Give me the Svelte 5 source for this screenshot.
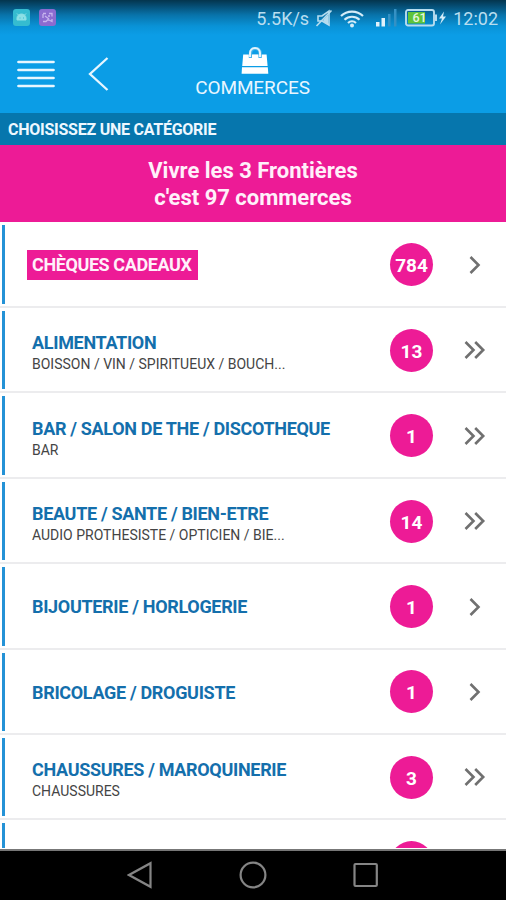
<script>
    const categories = [
        { name: 'CHÈQUES CADEAUX', count: 784, highlight: true },
        { name: 'ALIMENTATION', details: 'BOISSON / VIN / SPIRITUEUX / BOUCH...', count: 13 },
        { name: 'BAR / SALON DE THE / DISCOTHEQUE', details: 'BAR', count: 1 },
        { name: 'BEAUTE / SANTE / BIEN-ETRE', details: 'AUDIO PROTHESISTE / OPTICIEN / BIE...', count: 14 },
        { name: 'BIJOUTERIE / HORLOGERIE', count: 1 },
        { name: 'BRICOLAGE / DROGUISTE', count: 1 },
        { name: 'CHAUSSURES / MAROQUINERIE', details: 'CHAUSSURES', count: 3 },
        { name: '', count: '' }
    ];
</script>

<div class="screen">
    <header>
        <div class="status">
            <div class="notifications">
                <svg width="17" height="17" viewBox="0 0 17 17">
                    <rect width="17" height="17" rx="3" fill="#35bcd0" />
                    <path d="M4 11V9a4.5 4 0 0 1 9 0v2zM4 4.500l2 2M13 4.500l-2 2" fill="#8ce0e6" stroke="#8ce0e6" />
                    <path d="M6.500 9h1M10 9h1" stroke="#35bcd0" />
                </svg>
                <svg width="17" height="17" viewBox="0 0 17 17">
                    <rect width="17" height="17" rx="3" fill="#8b6bd0" />
                    <path d="M4 4.500h3M10 4.500h3v3M4 9V5M4 12.500h3l2-2 4 2V10M6 7l4 3M9 7h2" fill="none" stroke="#c6b4ee" stroke-width="1.300" />
                </svg>
            </div>
            <div class="indicators">
                <span class="speed">5.5K/s</span>
                <svg class="mute" width="18" height="19" viewBox="0 0 18 19">
                    <path d="M3 7h4l7-5v14l-7-4H3z" fill="none" stroke="#b5dcef" stroke-width="1.600" />
                    <path d="M9 10l4-4v10l-5-4z" fill="#b5dcef" />
                    <path d="M1.500 17L16.500 1.500" stroke="#b5dcef" stroke-width="1.700" />
                </svg>
                <svg class="wifi" width="24" height="19" viewBox="0 0 24 19">
                    <path d="M1 7a16 16 0 0 1 22 0M4.500 10.700a11 11 0 0 1 15 0M8 14a6 6 0 0 1 8 0" fill="none" stroke="#d4ecf8" stroke-width="2.200" />
                    <circle cx="12" cy="16.500" r="2" fill="#d4ecf8" />
                </svg>
                <svg class="signal" width="22" height="18" viewBox="0 0 22 18">
                    <path d="M0 13h3.500v4.500H0zM5.500 9H9v8.500H5.500z" fill="#e2f2fb" />
                    <path d="M12 5h2.500v12.500H12zM18 0h2.500v17.500H18z" fill="#3591c4" />
                </svg>
                <svg class="battery" width="43" height="18" viewBox="0 0 43 18">
                    <rect x="1" y="1" width="28" height="15.500" rx="2" fill="none" stroke="#b7dcef" stroke-width="1.900" />
                    <rect x="3" y="3" width="17" height="11.500" fill="#5fc43a" />
                    <path d="M30 5.500h2v6.500h-2z" fill="#b7dcef" />
                    <text x="14.500" y="13.200" text-anchor="middle">61</text>
                    <path d="M39 2.500l-5 7h3l-2 6 6-8h-3z" fill="#d4ecf8" />
                </svg>
                <span class="clock">12:02</span>
            </div>
        </div>
        <div class="toolbar">
            <svg class="menu" width="38" height="30" viewBox="0 0 38 30">
                <path d="M1.500 2h35M1.500 10h35M1.500 18h35M1.500 26h35" stroke="#e8f6ff" stroke-width="2.700" stroke-linecap="round" />
            </svg>
            <svg class="back" width="22" height="36" viewBox="0 0 22 36">
                <path d="M19.500 2L2 18l17.500 16" fill="none" stroke="#e8f6ff" stroke-width="2.300" />
            </svg>
            <div class="title">
                <svg width="28" height="28" viewBox="0 0 28 28">
                    <path d="M2.200 7.500h23.400L26.600 19H1.200zM1 20.300h25.800L27.300 26.700H.6z" fill="#fff" />
                    <path d="M9.500 11V6a4.800 4.800 0 0 1 9.600 0v5" fill="none" stroke="#4bb6ec" stroke-width="3.400" />
                    <path d="M9 10V6a5 5 0 0 1 10 0v4" fill="none" stroke="#e3f4fd" stroke-width="2" />
                    <path d="M11 7.800h6v5h-6z" fill="#fff" />
                </svg>
                <h1>COMMERCES</h1>
            </div>
        </div>
    </header>

    <div class="subtitle">CHOISISSEZ UNE CATÉGORIE</div>

    <div class="banner">
        <p>Vivre les 3 Frontières</p>
        <p>c'est 97 commerces</p>
    </div>

    <ul>
        {#each categories as category}
            <li>
                <div class="labels">
                    <span class="name" class:highlight={category.highlight}>{category.name}</span>
                    {#if category.details}
                        <span class="details">{category.details}</span>
                    {/if}
                </div>
                <span class="count">{category.count}</span>
                <svg class="arrow" width="24" height="20" viewBox="0 0 24 20">
                    {#if category.details}
                        <path d="M2.500 2l8 8-8 8M12.200 2l8 8-8 8" />
                    {:else}
                        <path d="M7.500 2l8 8-8 8" />
                    {/if}
                </svg>
            </li>
        {/each}
    </ul>

    <nav>
        <svg width="26" height="28" viewBox="0 0 26 28">
            <path d="M23.500 2.200v23.600L2 14z" />
        </svg>
        <svg width="28" height="28" viewBox="0 0 28 28">
            <circle cx="14" cy="14" r="12.400" />
        </svg>
        <svg width="26" height="28" viewBox="0 0 26 28">
            <rect x="1.500" y="3" width="22.300" height="22" rx="1" />
        </svg>
    </nav>
</div>

<style>
    :global(body) {
        margin: 0;
    }

    .screen {
        width: 506px;
        height: 900px;
        display: flex;
        flex-direction: column;
        overflow: hidden;
        background: white;
        font-family: Roboto, "Liberation Sans", sans-serif;
    }

    header {
        height: 113px;
        flex: none;
        background: linear-gradient(#04354d 0, #05496d 5px, #0873aa 15px, #0992d6 26px, #0b9de6 35px);
    }

    .status {
        height: 36px;
        display: flex;
        justify-content: space-between;
        align-items: center;
        padding: 0 8px 0 13px;
        box-sizing: border-box;
        color: #b9def0;
    }

    .notifications {
        display: flex;
        gap: 9px;
        margin-top: -2px;
    }

    .indicators {
        display: flex;
        align-items: center;
    }

    .speed {
        font-size: 18px;
    }

    .mute {
        margin-left: 6px;
    }

    .wifi {
        margin-left: 7px;
    }

    .signal {
        margin-left: 12px;
    }

    .battery {
        margin-left: 7px;
    }

    .battery text {
        font-size: 12.500px;
        font-weight: 500;
        fill: #e5f7dd;
    }

    .clock {
        margin-left: 5px;
        font-size: 18px;
    }

    .toolbar {
        display: grid;
        grid-template-columns: 71px 126px 116px 1fr;
        height: 77px;
        padding-left: 17px;
        box-sizing: border-box;
    }

    .menu {
        margin-top: 24px;
    }

    .back {
        margin-top: 20px;
    }

    .title {
        display: flex;
        flex-direction: column;
        align-items: center;
        padding-top: 11px;
        margin-left: -39px;
        color: #e8f6ff;
    }

    .title svg {
        margin-left: 5px;
    }

    h1 {
        margin: 2px 0 0;
        font-size: 19px;
        line-height: 22px;
        font-weight: 400;
        letter-spacing: -0.100px;
    }

    .subtitle {
        height: 32px;
        flex: none;
        padding-left: 8px;
        background: #0676ad;
        color: #eef8ff;
        font-size: 16px;
        line-height: 34px;
        font-weight: 700;
        letter-spacing: -0.250px;
    }

    .banner {
        height: 77px;
        flex: none;
        padding-top: 12px;
        box-sizing: border-box;
        background: #ed1b96;
        color: #fff0fa;
        font-size: 22px;
        font-weight: 700;
        line-height: 27px;
        text-align: center;
    }

    .banner p {
        margin: 0;
    }

    ul {
        height: 626px;
        flex: none;
        margin: 0;
        padding: 0;
        overflow: hidden;
        list-style: none;
    }

    li {
        position: relative;
        display: flex;
        align-items: center;
        height: 85.400px;
        padding: 1.400px 19px 0 32px;
        box-sizing: border-box;
        border-bottom: 2px solid #ececee;
    }

    li:first-child {
        height: 86px;
    }

    /* blue marker on the left edge */
    li::before {
        content: "";
        position: absolute;
        top: 3px;
        bottom: 2px;
        left: 2px;
        width: 3px;
        background: #2492d6;
    }

    .labels {
        flex: 1;
        display: flex;
        flex-direction: column;
        align-items: flex-start;
        padding-top: 1.600px;
    }

    .name {
        color: #146fac;
        font-size: 18px;
        font-weight: 700;
        line-height: 22px;
        letter-spacing: -0.320px;
        white-space: nowrap;
    }

    .highlight {
        margin: -1px 0 0 -5px;
        padding: 4px 6px 4px 5px;
        background: #ed1b96;
        color: #fff0fa;
        letter-spacing: -0.400px;
    }

    .details {
        margin-bottom: -4px;
        color: #444;
        font-size: 14px;
        line-height: 20px;
        white-space: nowrap;
    }

    .count {
        width: 43px;
        height: 43px;
        margin-right: 30px;
        border-radius: 50%;
        background: #ed1b96;
        color: white;
        font-size: 19px;
        font-weight: 700;
        line-height: 45px;
        text-align: center;
    }

    .arrow path {
        fill: none;
        stroke: #707070;
        stroke-width: 2.600;
    }

    nav {
        height: 52px;
        flex: none;
        display: flex;
        justify-content: center;
        gap: 86px;
        padding-top: 10px;
        box-sizing: border-box;
        margin-top: 1px;
        border-top: 2px solid #777;
        background: black;
    }

    nav svg {
        fill: none;
        stroke: #858585;
        stroke-width: 2.200;
    }
</style>
